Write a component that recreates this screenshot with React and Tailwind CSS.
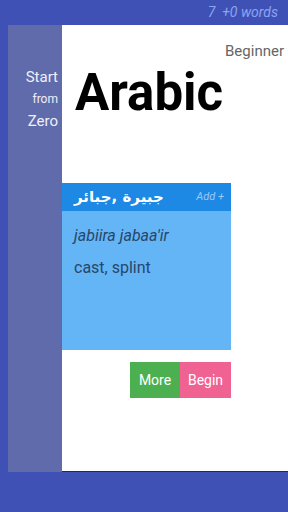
export default function App() {
  return (
    <div className="w-[288px] h-[512px] bg-[#3f51b5] flex flex-col overflow-hidden" style={{ fontFamily: "Roboto, 'Noto Sans', sans-serif" }}>
      <div className="h-[25px] flex items-center justify-end pr-[10px]">
        <span className="italic text-[14px] text-[#8aa4f2] whitespace-pre">7  +0 words</span>
      </div>
      <div className="h-[447px] flex pl-[8px]">
        <div className="w-[54px] bg-[#5f6bab] flex flex-col items-end pr-[4px] pt-[42px] text-[#eef0fa]">
          <span className="text-[15px] leading-[20px]">Start</span>
          <span className="text-[12px] leading-[22px] mt-[1px]">from</span>
          <span className="text-[15px] leading-[20px] mt-[1px]">Zero</span>
        </div>
        <div className="flex-1 bg-white border-b border-[#1a237e] flex flex-col">
          <div className="flex justify-end pr-[4px] pt-[16px]">
            <span className="text-[15px] leading-[20px] text-[#666]">Beginner</span>
          </div>
          <div className="pl-[13px] mt-[2px]">
            <span className="font-bold text-[51px] leading-[60px] text-black">Arabic</span>
          </div>
          <div className="w-[169px] mt-[60px] flex flex-col">
            <div className="h-[28px] bg-[#1e88e5] flex items-center justify-between pl-[12px] pr-[7px]">
              <span className="text-white font-bold text-[15px]" style={{ fontFamily: "'DejaVu Sans', 'Noto Sans', sans-serif" }} dir="rtl">جبيرة ,جبائر</span>
              <span className="italic text-[11px] text-[#9ccaf5]">Add +</span>
            </div>
            <div className="h-[139px] bg-[#64b5f6] pl-[12px] pt-[14px] text-[#28466a]">
              <div className="italic text-[16px] leading-[22px]">jabiira jabaa'ir</div>
              <div className="text-[16px] leading-[22px] mt-[10px]">cast, splint</div>
            </div>
            <div className="flex justify-end mt-[12px]">
              <div className="w-[50px] h-[36px] bg-[#4caf50] text-white text-[14px] flex items-center justify-center">More</div>
              <div className="w-[51px] h-[36px] bg-[#f06292] text-white text-[14px] flex items-center justify-center">Begin</div>
            </div>
          </div>
        </div>
      </div>
    </div>
  );
}
